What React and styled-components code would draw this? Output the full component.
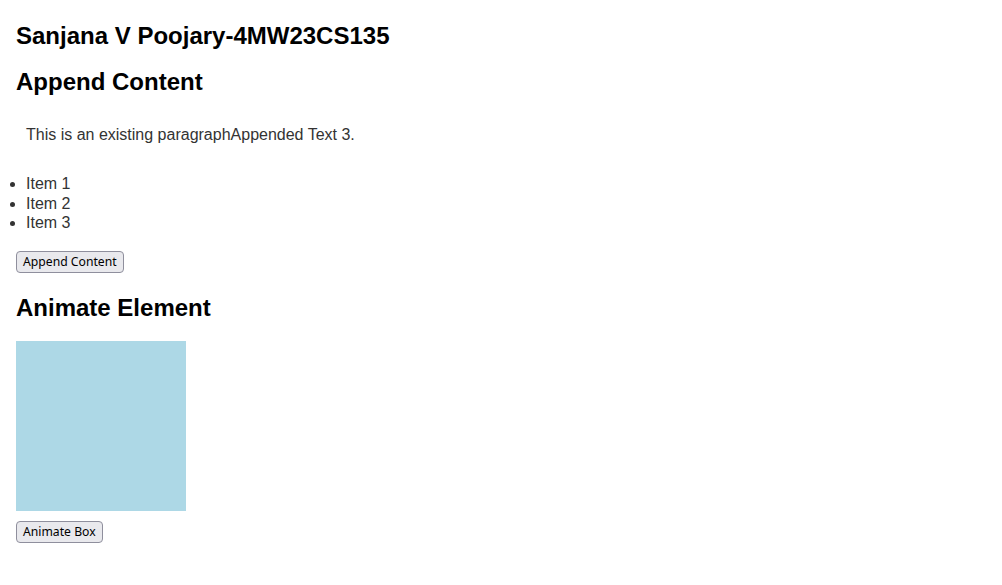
import React from 'react';
import styled, { createGlobalStyle } from 'styled-components';

const GlobalStyle = createGlobalStyle`
  body {
    margin: 0;
    background: #fff;
    font-family: "Liberation Sans", Arial, sans-serif;
  }
`;

const Page = styled.div`
  display: flex;
  flex-direction: column;
  align-items: flex-start;
  padding: 0 16px;
`;

const Heading = styled.h2`
  margin: ${(p) => p.$top}px 0 0;
  font-size: 24px;
  line-height: 28px;
  font-weight: bold;
  color: #000;
`;

const Paragraph = styled.p`
  margin: 20px 0 0;
  padding: 10px;
  font-size: 16px;
  line-height: 18px;
  color: #333;
`;

const List = styled.ul`
  margin: 20px 0 0;
  padding-left: 10px;
  font-size: 16px;
  line-height: 19.5px;
  color: #333;
`;

const Button = styled.button`
  margin-top: ${(p) => p.$top}px;
  height: 22px;
  padding: 1px 6px;
  font-family: "Noto Sans", "DejaVu Sans", sans-serif;
  font-size: 12.2px;
  color: #000;
  background: #e9e9ed;
  border: 1px solid #8f8f9d;
  border-radius: 4px;
  cursor: pointer;
`;

const Box = styled.div`
  margin-top: ${(p) => p.$top}px;
  width: 170px;
  height: 170px;
  background: lightblue;
`;

export default function App() {
  const items = ['Item 1', 'Item 2', 'Item 3'];
  return (
    <>
      <GlobalStyle />
      <Page>
        <Heading $top={22}>Sanjana V Poojary-4MW23CS135</Heading>
        <Heading $top={18}>Append Content</Heading>
        <Paragraph>This is an existing paragraphAppended Text 3.</Paragraph>
        <List>
          {items.map((item) => (
            <li key={item}>{item}</li>
          ))}
        </List>
        <Button $top={18}>Append Content</Button>
        <Heading $top={21}>Animate Element</Heading>
        <Box $top={19} />
        <Button $top={10}>Animate Box</Button>
      </Page>
    </>
  );
}
